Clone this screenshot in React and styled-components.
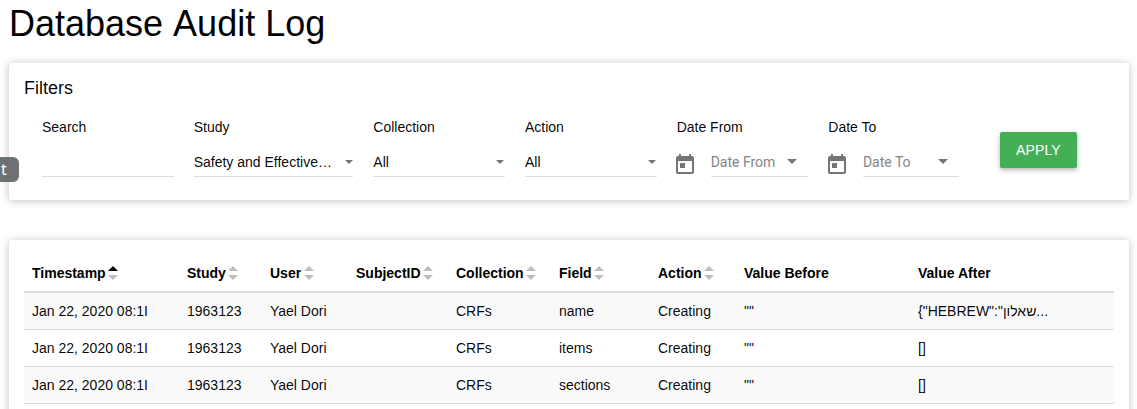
import React from 'react';
import styled, { createGlobalStyle } from 'styled-components';

const GlobalStyle = createGlobalStyle`
  * { box-sizing: border-box; }
  html, body { margin: 0; height: 100%; overflow: hidden; }
  body {
    background: #fff;
    color: rgba(0, 0, 0, 0.97);
    font: 14px/20px "Liberation Sans", Arial, sans-serif;
  }
`;

const Page = styled.div`
  height: 100vh;
  overflow: hidden;
  padding: 4px 8px 0 9px;
`;

const Title = styled.h1`
  margin: 0 0 19px;
  font-size: 36px;
  line-height: 40px;
  font-weight: 400;
  font-kerning: none;
  color: #000;
`;

const Card = styled.section`
  padding: 15px;
  height: ${(p) => p.$height}px;
  margin-bottom: 40px;
  background: #fff;
  border-radius: 2px;
  box-shadow: 0 1px 8px rgba(0, 0, 0, 0.25);
`;

const CardTitle = styled.h2`
  margin: 0;
  font-size: 18px;
  line-height: 20px;
  font-weight: 400;
`;

const FilterRow = styled.div`
  display: flex;
  gap: 20px;
  padding: 19px 0 0 18px;
`;

const Field = styled.div`
  flex: none;
  width: ${(p) => p.$width || 131.67}px;
`;

const Label = styled.div`
  height: 20px;
`;

const Control = styled.div`
  display: flex;
  align-items: center;
  justify-content: space-between;
  flex: 1;
  height: 30px;
  margin-top: 10px;
  padding-right: ${(p) => p.$inset || 0}px;
  border-bottom: 1px solid #dedede;
  color: ${(p) => (p.$muted ? '#858585' : 'inherit')};
  font-family: ${(p) => (p.$muted ? 'Roboto, sans-serif' : 'inherit')};
  white-space: nowrap;
`;

const DateControl = styled.div`
  display: flex;
  gap: 18px;
  padding: 0 ${(p) => p.$trim || 0}px 0 ${(p) => p.$shift || 0}px;
`;

const CalendarSvg = styled.svg`
  flex: none;
  width: 24px;
  height: 24px;
  margin: 16px -4px 0 -4px;
  fill: #757575;
`;

const Caret = styled.svg`
  flex: none;
  width: ${(p) => p.$size}px;
  height: ${(p) => p.$size / 2}px;
  fill: #757575;
`;

const ApplyButton = styled.button`
  width: 77px;
  height: 36px;
  margin: 15px 0 0 20px;
  padding: 0;
  border: 0;
  border-radius: 2px;
  background: #43b058;
  box-shadow: 0 2px 5px rgba(0, 0, 0, 0.3);
  color: #fff;
  font: 14px/36px "Liberation Sans", Arial, sans-serif;
  letter-spacing: 0.14px;
`;

const Table = styled.table`
  width: 1090px;
  table-layout: fixed;
  border-collapse: separate;
  border-spacing: 0;
`;

const HeadCell = styled.th`
  width: ${(p) => p.$width}px;
  height: 38px;
  padding: 8px 0 8px 8px;
  border-bottom: 2px solid #dcdcdc;
  color: #000;
  text-align: left;
  white-space: nowrap;
`;

const HeadLabel = styled.span`
  display: flex;
  align-items: center;
  gap: 2.5px;
`;

const SortSvg = styled.svg`
  width: 10px;
  height: 14px;
`;

const Row = styled.tr`
  background: ${(p) => (p.$striped ? '#f9f9f9' : '#fff')};
`;

const Cell = styled.td`
  height: 37px;
  padding: 8px 0 8px 8px;
  border-bottom: 1px solid #dcdcdc;
  white-space: nowrap;
`;

const EdgeTooltip = styled.div`
  position: absolute;
  left: 0;
  top: 157px;
  width: 19px;
  height: 25px;
  border-radius: 0 6px 6px 0;
  background: rgba(84, 89, 91, 0.85);
  color: #fff;
  font: 16px/25px "Noto Sans", sans-serif;
  padding-left: 1px;
`;

const COLUMNS = [
  { label: 'Timestamp', width: 155, sort: 'asc' },
  { label: 'Study', width: 83, sort: 'none' },
  { label: 'User', width: 86, sort: 'none' },
  { label: 'SubjectID', width: 100, sort: 'none' },
  { label: 'Collection', width: 103, sort: 'none' },
  { label: 'Field', width: 99, sort: 'none' },
  { label: 'Action', width: 86, sort: 'none' },
  { label: 'Value Before', width: 174 },
  { label: 'Value After', width: 204 },
];

const ROWS = [
  ['name', '{"HEBREW":"שאלון\u200e...'],
  ['items', '[]'],
  ['sections', '[]'],
].map(([field, after]) => [
  'Jan 22, 2020 08:1I', '1963123', 'Yael Dori', '', 'CRFs', field, 'Creating', '""', after,
]);

function CaretDown({ size }) {
  return (
    <Caret $size={size} viewBox="0 0 10 5">
      <path d="M0 0h10L5 5z" />
    </Caret>
  );
}

function SortIcon({ direction }) {
  return (
    <SortSvg viewBox="0 0 10 14">
      <path d="M0 5L5 0l5 5z" fill={direction === 'asc' ? '#000' : '#bdbdbd'} />
      <path d="M0 9h10l-5 5z" fill="#bdbdbd" />
    </SortSvg>
  );
}

function SelectField({ label, value, width }) {
  return (
    <Field $width={width}>
      <Label>{label}</Label>
      <Control $inset={0.6}>
        {value}
        <CaretDown size={8} />
      </Control>
    </Field>
  );
}

function DateField({ label, trim, shift }) {
  return (
    <Field>
      <Label>{label}</Label>
      <DateControl $trim={trim} $shift={shift}>
        <CalendarSvg viewBox="0 0 24 24">
          <path d="M7 10h5v5H7zM19 3h-1V1h-2v2H8V1H6v2H5c-1.11 0-1.99.9-1.99 2L3 19c0 1.1.89 2 2 2h14c1.1 0 2-.9 2-2V5c0-1.1-.9-2-2-2zm0 16H5V8h14v11z" />
        </CalendarSvg>
        <Control $muted $inset={11}>
          {label}
          <CaretDown size={10} />
        </Control>
      </DateControl>
    </Field>
  );
}

export default function App() {
  return (
    <>
      <GlobalStyle />
      <Page>
        <Title>Database Audit Log</Title>
        <Card $height={137}>
          <CardTitle>Filters</CardTitle>
          <FilterRow>
            <Field>
              <Label>Search</Label>
              <Control />
            </Field>
            <SelectField label="Study" value="Safety and Effective…" width={159.67} />
            <SelectField label="Collection" value="All" />
            <SelectField label="Action" value="All" />
            <DateField label="Date From" />
            <DateField label="Date To" trim={0.8} shift={0.65} />
            <ApplyButton>APPLY</ApplyButton>
          </FilterRow>
        </Card>
        <Card $height={220}>
          <Table>
            <thead>
              <tr>
                {COLUMNS.map((c) => (
                  <HeadCell key={c.label} $width={c.width}>
                    <HeadLabel>
                      {c.label}
                      {c.sort && <SortIcon direction={c.sort} />}
                    </HeadLabel>
                  </HeadCell>
                ))}
              </tr>
            </thead>
            <tbody>
              {ROWS.map((cells, r) => (
                <Row key={r} $striped={r % 2 === 0}>
                  {cells.map((text, i) => (
                    <Cell key={i}>{text}</Cell>
                  ))}
                </Row>
              ))}
            </tbody>
          </Table>
        </Card>
      </Page>
      <EdgeTooltip>t</EdgeTooltip>
    </>
  );
}
